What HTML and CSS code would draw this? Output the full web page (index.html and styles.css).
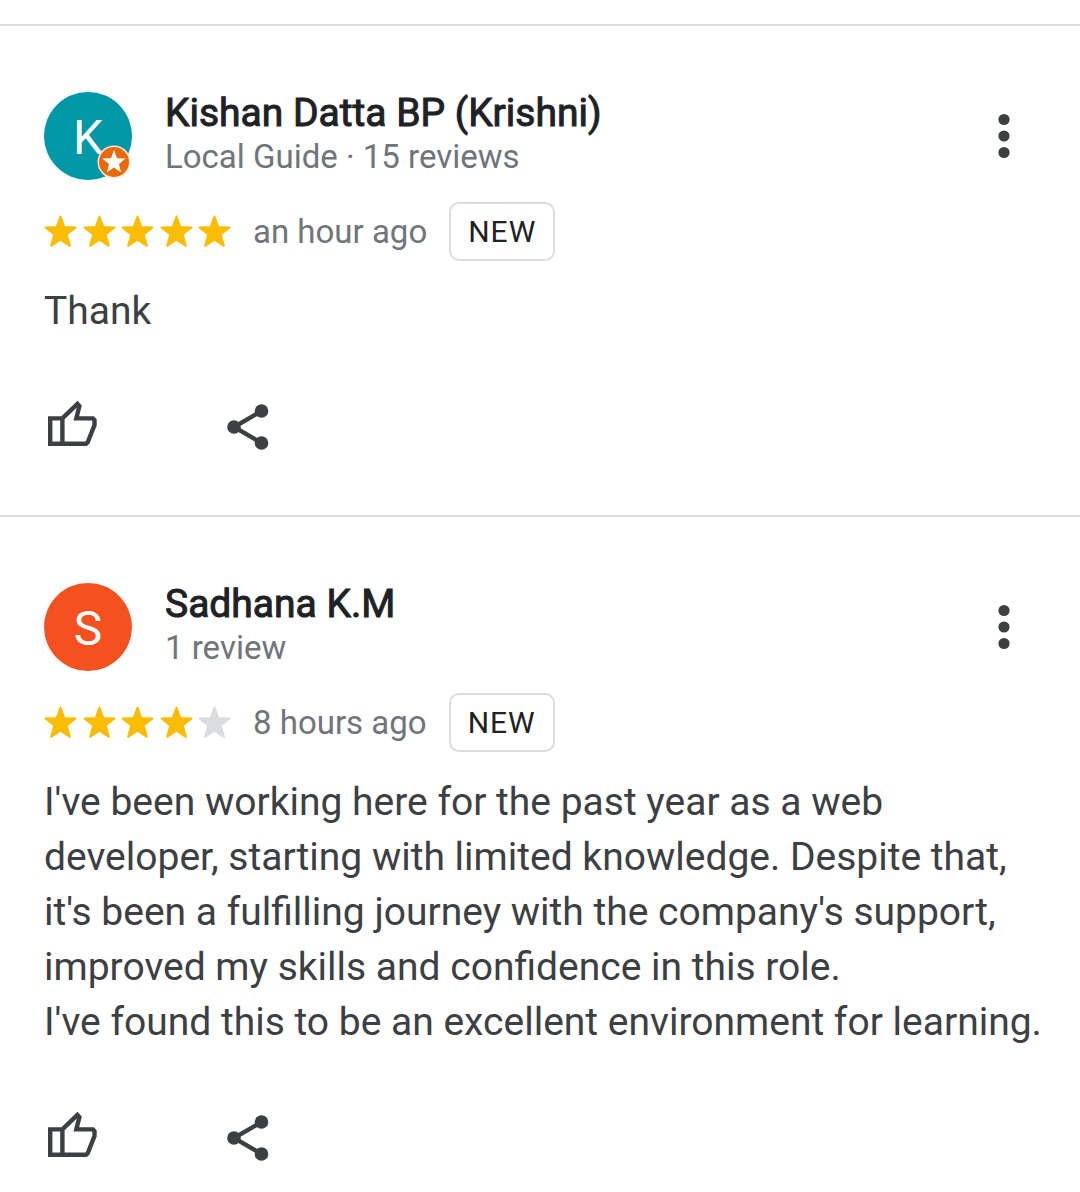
FILE: index.html
```html
<!DOCTYPE html>
<html lang="en">
<head>
<meta charset="utf-8">
<meta name="viewport" content="width=device-width, initial-scale=1">
<title>Reviews</title>
<link rel="stylesheet" href="styles.css">
</head>
<body>
<svg class="sprite" aria-hidden="true">
  <symbol id="star" viewBox="0 0 33 33"><path d="M16.500 1.500L20.300 12L31.500 12.500L22.700 19.500L25.900 30.800L16.500 24.600L7.100 30.800L10.300 19.500L1.500 12.500L12.700 12Z" fill="currentColor" stroke="currentColor" stroke-width="2" stroke-linejoin="round"/></symbol>
  <symbol id="like" viewBox="-4 -7 60 60"><path d="M2.200 17.400H14.400L29.400 2.800L31.400 5L28.300 17.400H45L46.500 19V24L39.600 41.500L38 42.800H2.200ZM14.400 17.400V42.800" fill="none" stroke="currentColor" stroke-width="4.400"/></symbol>
  <symbol id="share" viewBox="-5 -10 60 60"><path d="M34.500 7L7 23L34.500 39" fill="none" stroke="currentColor" stroke-width="4.400"/><g fill="currentColor"><circle cx="34.500" cy="7" r="6.800"/><circle cx="7" cy="23" r="6.800"/><circle cx="34.500" cy="39" r="6.800"/></g></symbol>
  <symbol id="more" viewBox="0 0 12 46"><g fill="currentColor"><circle cx="6" cy="6.500" r="5.600"/><circle cx="6" cy="23" r="5.600"/><circle cx="6" cy="39.500" r="5.600"/></g></symbol>
</svg>
<main class="reviews">
  <article class="review">
    <header class="author">
      <div class="avatar avatar-teal">K
        <svg class="guide" viewBox="0 0 34 34" aria-label="Local Guide"><circle cx="17" cy="17" r="16.500" fill="#fbe9d9"/><circle cx="17" cy="17" r="15" fill="#ea6a0a"/><path d="M17 5L20 13.200L28.700 13.600L21.900 19L24.200 27.400L17 22.600L9.800 27.400L12.100 19L5.300 13.600L14 13.200Z" fill="#fff"/></svg>
      </div>
      <div class="identity">
        <h2 class="name">Kishan Datta BP (Krishni)</h2>
        <p class="meta">Local Guide · 15 reviews</p>
      </div>
      <button class="more" type="button" aria-label="More options"><svg class="icon-more"><use href="#more"/></svg></button>
    </header>
    <div class="rating">
      <div class="stars" role="img" aria-label="5 stars">
        <svg class="star"><use href="#star"/></svg><svg class="star"><use href="#star"/></svg><svg class="star"><use href="#star"/></svg><svg class="star"><use href="#star"/></svg><svg class="star"><use href="#star"/></svg>
      </div>
      <span class="time">an hour ago</span>
      <span class="tag">NEW</span>
    </div>
    <p class="text">Thank</p>
    <div class="actions">
      <button class="action" type="button" aria-label="Like"><svg class="icon"><use href="#like"/></svg></button>
      <button class="action" type="button" aria-label="Share"><svg class="icon"><use href="#share"/></svg></button>
    </div>
  </article>
  <article class="review">
    <header class="author">
      <div class="avatar avatar-orange">S</div>
      <div class="identity">
        <h2 class="name">Sadhana K.M</h2>
        <p class="meta">1 review</p>
      </div>
      <button class="more" type="button" aria-label="More options"><svg class="icon-more"><use href="#more"/></svg></button>
    </header>
    <div class="rating">
      <div class="stars" role="img" aria-label="4 stars">
        <svg class="star"><use href="#star"/></svg><svg class="star"><use href="#star"/></svg><svg class="star"><use href="#star"/></svg><svg class="star"><use href="#star"/></svg><svg class="star star-off"><use href="#star"/></svg>
      </div>
      <span class="time">8 hours ago</span>
      <span class="tag">NEW</span>
    </div>
    <p class="text">I've been working here for the past year as a web developer, starting with limited knowledge. Despite that, it's been a fulfilling journey with the company's support, improved my skills and confidence in this role.<br>I've found this to be an excellent environment for learning.</p>
    <div class="actions">
      <button class="action" type="button" aria-label="Like"><svg class="icon"><use href="#like"/></svg></button>
      <button class="action" type="button" aria-label="Share"><svg class="icon"><use href="#share"/></svg></button>
    </div>
  </article>
</main>
</body>
</html>
```
FILE: styles.css
```css
* {
  box-sizing: border-box;
}

body {
  margin: 0;
  background: #fff;
  color: #3c4043;
  font-family: Roboto, sans-serif;
}

h2,
p {
  margin: 0;
}

button {
  display: flex;
  align-items: center;
  padding: 0;
  border: 0;
  background: none;
  color: #3c4043;
  cursor: pointer;
}

.sprite {
  position: absolute;
  width: 0;
  height: 0;
}

.reviews {
  padding-top: 24px;
}

.review {
  padding: 66px 32px 61px 44px;
  border-top: 2px solid #dadce0;
}

.review:last-child {
  padding-bottom: 24px;
}

.author {
  display: flex;
  align-items: center;
  gap: 33px;
}

.avatar {
  position: relative;
  flex: none;
  width: 88px;
  height: 88px;
  border-radius: 50%;
  color: #fff;
  font-size: 48px;
  line-height: 92px;
  text-align: center;
}

.avatar-teal {
  background: #0097a7;
}

.avatar-orange {
  background: #f4511e;
}

.guide {
  position: absolute;
  right: 1px;
  bottom: 1px;
  width: 34px;
  height: 34px;
}

.identity {
  flex: 1;
  height: 88px;
}

.name {
  color: #202124;
  font-size: 39px;
  font-weight: 400;
  line-height: 42px;
  -webkit-text-stroke: 1px #202124;
}

.meta,
.time {
  color: #70757a;
  font-size: 33px;
  line-height: 46px;
}

.more {
  justify-content: center;
  width: 88px;
  height: 64px;
}

.icon-more {
  width: 12px;
  height: 46px;
}

.rating {
  display: flex;
  align-items: center;
  gap: 22px;
  margin-top: 22px;
}

.stars {
  display: flex;
  justify-content: space-between;
  width: 187px;
  color: #fbbc04;
}

.star {
  width: 33px;
  height: 33px;
}

.star-off {
  color: #dadce0;
}

.tag {
  padding: 0 17px;
  border: 2px solid #dadce0;
  border-radius: 10px;
  color: #202124;
  font-size: 30px;
  line-height: 55px;
  letter-spacing: 1px;
}

.text {
  margin-top: 23px;
  font-size: 39px;
  line-height: 55px;
}

.actions {
  display: flex;
  gap: 118px;
  margin-top: 55px;
}

.action {
  width: 60px;
  height: 60px;
}

.icon {
  width: 60px;
  height: 60px;
}
```
